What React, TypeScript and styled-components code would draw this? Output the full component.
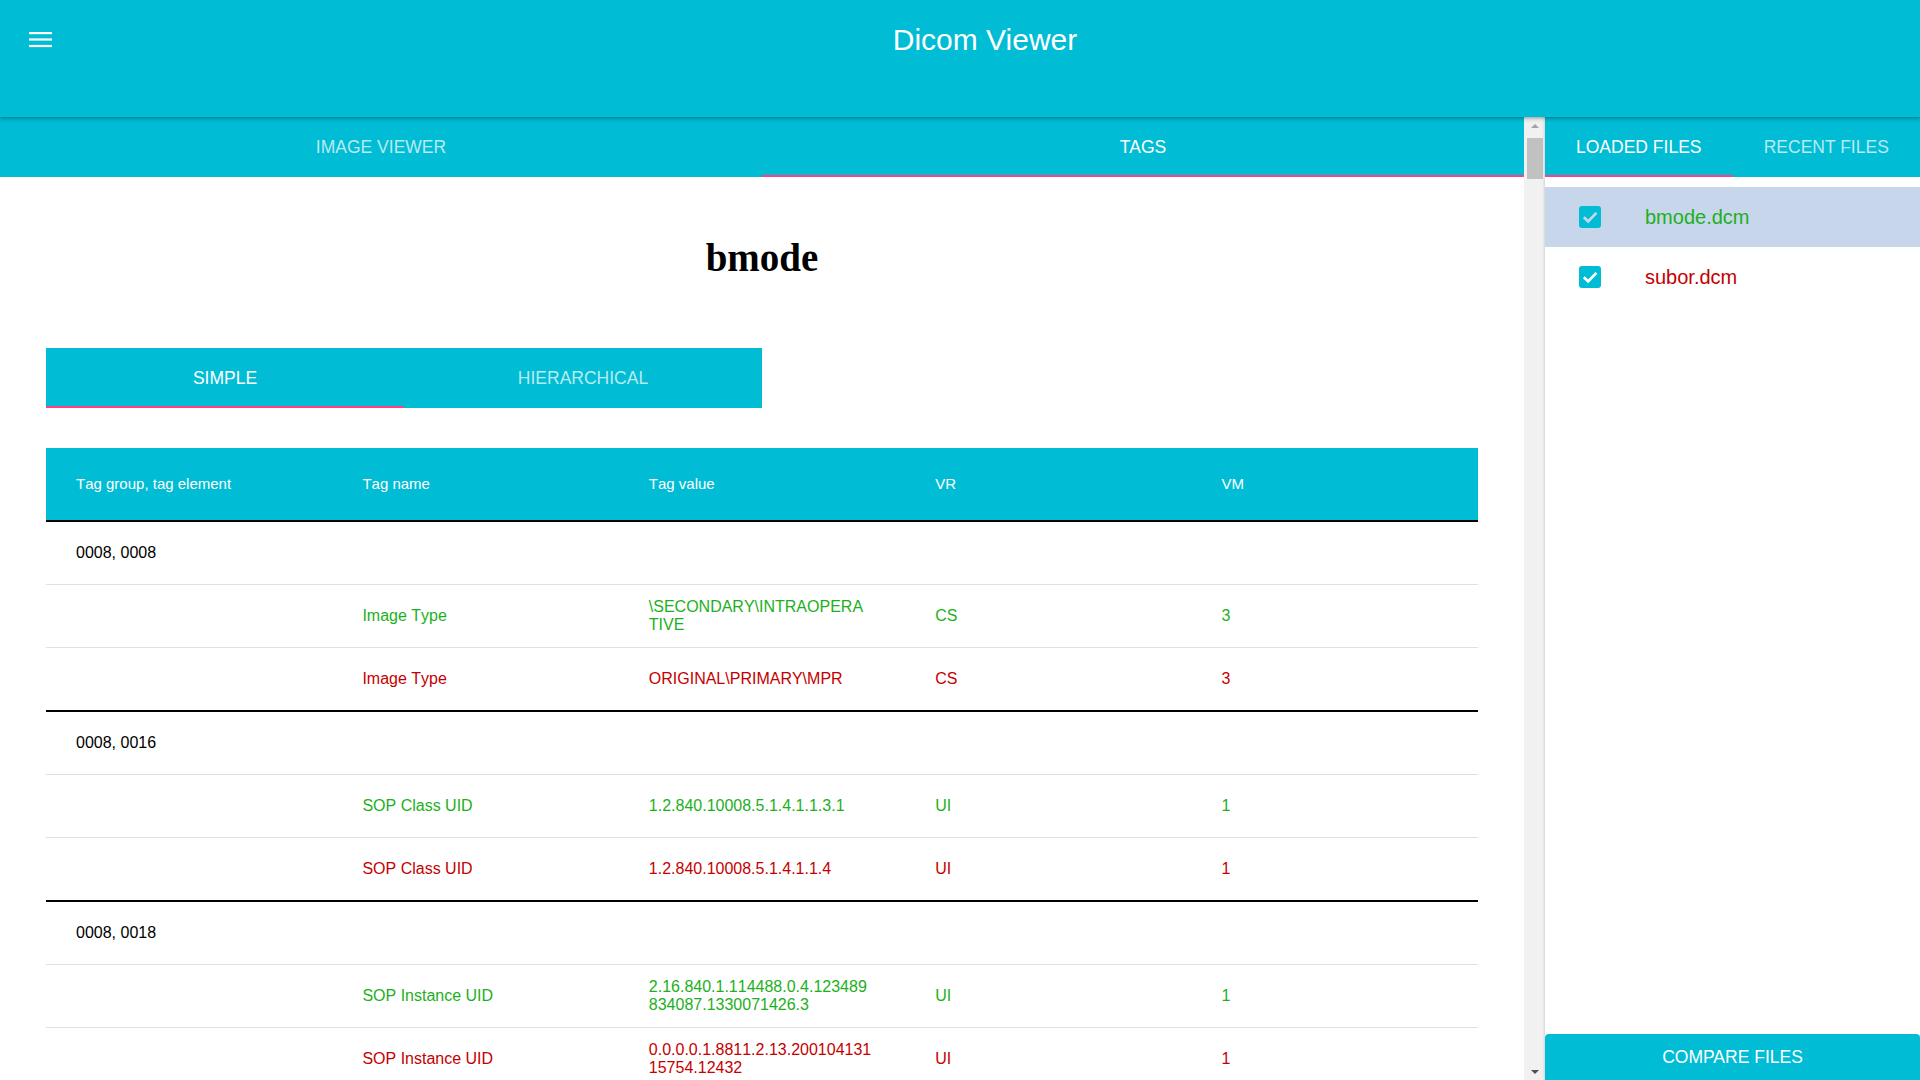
import React from 'react';
import styled, { createGlobalStyle } from 'styled-components';

const CYAN = '#00bcd4';
const PINK = '#ff4081';
const GREEN = '#1cb01c';
const RED = '#c40000';
const SELECTED = '#c8d6ec';

const GlobalStyle = createGlobalStyle`
  html, body { margin: 0; padding: 0; height: 100%; overflow: hidden; }
  body { font-family: "Liberation Sans", Arial, sans-serif; background: #fff; color: #000; }
  #root { height: 100vh; }
  * { box-sizing: border-box; }
`;

const Page = styled.div`
  display: flex;
  flex-direction: column;
  width: 1920px;
  height: 1080px;
  overflow: hidden;
`;

const Header = styled.header`
  position: relative;
  z-index: 2;
  flex-shrink: 0;
  height: 117px;
  background: ${CYAN};
  box-shadow: 0 2px 4px rgba(0, 0, 0, 0.22), 0 1px 2px rgba(0, 0, 0, 0.12);
`;

const Toolbar = styled.div`
  display: flex;
  align-items: center;
  height: 80px;
`;

const MenuButton = styled.button`
  width: 80px;
  height: 80px;
  padding: 0 0 0 29px;
  border: 0;
  background: none;
  display: flex;
  align-items: center;
  cursor: pointer;
`;

const Title = styled.h1`
  flex: 1;
  margin: 0 30px 0 0;
  text-align: center;
  color: #fff;
  font-weight: 400;
  font-size: 30px;
  line-height: 34px;
`;

const Body = styled.div`
  flex: 1;
  display: flex;
  min-height: 0;
`;

const Main = styled.div`
  flex: 1;
  display: flex;
  min-width: 0;
`;

const MainContent = styled.div`
  flex: 1;
  min-width: 0;
  overflow: hidden;
`;

const TabBar = styled.div<{ $cols: number }>`
  display: grid;
  grid-template-columns: repeat(${p => p.$cols}, 1fr);
  height: 60px;
  background: ${CYAN};
`;

const Tab = styled.div<{ $active?: boolean }>`
  display: flex;
  align-items: center;
  justify-content: center;
  font-size: 17.5px;
  text-transform: uppercase;
  color: ${p => (p.$active ? '#fff' : 'rgba(255,255,255,0.72)')};
  border-bottom: 2px solid ${p => (p.$active ? PINK : 'transparent')};
  padding-top: 2px;
  cursor: pointer;
`;

const FileTitle = styled.h2`
  margin: 58px 0 68px;
  text-align: center;
  font-family: "Liberation Serif", "Times New Roman", serif;
  font-weight: 700;
  font-size: 39px;
  line-height: 45px;
`;

const SubTabs = styled(TabBar)`
  width: 716px;
  margin: 0 0 40px 46px;
`;

const Table = styled.div`
  margin: 0 46px;
`;

const Row = styled.div<{ $kind: 'head' | 'group' | 'item' }>`
  display: grid;
  grid-template-columns: repeat(5, 1fr);
  height: ${p => (p.$kind === 'head' ? 72 : 62)}px;
  box-sizing: content-box;
  align-items: center;
  background: ${p => (p.$kind === 'head' ? CYAN : '#fff')};
  border-bottom: ${p => (p.$kind === 'head' ? 'none' : '1px solid #e0e0e0')};
  border-top: ${p => (p.$kind === 'group' ? '2px solid #000' : 'none')};
`;

const Group = styled.div`
  & > ${Row}:last-child {
    border-bottom: none;
  }
`;

const Cell = styled.div<{ $tone?: 'head' | 'black' | 'green' | 'red' }>`
  padding: 0 33.6px 0 30px;
  font-size: ${p => (p.$tone === 'head' ? 15 : 16)}px;
  line-height: 18px;
  word-break: break-all;
  font-kerning: none;
  color: ${p =>
    p.$tone === 'head' ? '#fff' : p.$tone === 'green' ? GREEN : p.$tone === 'red' ? RED : '#000'};
`;

const ScrollTrack = styled.div`
  width: 21px;
  flex-shrink: 0;
  background: #f1f1f1;
  display: flex;
  flex-direction: column;
  align-items: center;
`;

const ArrowButton = styled.div<{ $dir: 'up' | 'down' }>`
  height: 17px;
  width: 100%;
  display: flex;
  align-items: center;
  justify-content: center;
  &::after {
    content: '';
    width: 0;
    height: 0;
    border-left: 4px solid transparent;
    border-right: 4px solid transparent;
    ${p =>
      p.$dir === 'up'
        ? 'border-bottom: 4px solid #a3a3a3;'
        : 'border-top: 4px solid #505050;'}
  }
`;

const Thumb = styled.div`
  width: 16px;
  height: 41px;
  margin: 4px 0 0 1px;
  background: #c1c1c1;
`;

const Spacer = styled.div`
  flex: 1;
`;

const Sidebar = styled.aside`
  position: relative;
  width: 375px;
  flex-shrink: 0;
  display: flex;
  flex-direction: column;
  box-shadow: -1px 0 2px rgba(0, 0, 0, 0.12);
`;

const FileList = styled.ul`
  list-style: none;
  margin: 0;
  padding: 10px 0 0;
  flex: 1;
`;

const FileItem = styled.li<{ $selected?: boolean }>`
  display: flex;
  align-items: center;
  height: 60px;
  padding-left: 34px;
  background: ${p => (p.$selected ? SELECTED : '#fff')};
`;

const CheckBox = styled.span`
  width: 22px;
  height: 22px;
  border-radius: 3px;
  background: ${CYAN};
  display: flex;
  align-items: center;
  justify-content: center;
  margin-right: 44px;
`;

const FileName = styled.span<{ $tone: 'green' | 'red' }>`
  font-size: 20px;
  color: ${p => (p.$tone === 'green' ? GREEN : RED)};
`;

const CompareButton = styled.button`
  height: 46px;
  border: 0;
  border-radius: 4px 4px 0 0;
  background: ${CYAN};
  color: #fff;
  font-family: "Liberation Sans", Arial, sans-serif;
  font-size: 17.5px;
  text-transform: uppercase;
  cursor: pointer;
`;

type Item = { name: string; value: string; vr: string; vm: string; tone: 'green' | 'red' };
type TagGroup = { tag: string; items: Item[] };

const groups: TagGroup[] = [
  {
    tag: '0008, 0008',
    items: [
      { name: 'Image Type', value: '\\SECONDARY\\INTRAOPERATIVE', vr: 'CS', vm: '3', tone: 'green' },
      { name: 'Image Type', value: 'ORIGINAL\\PRIMARY\\MPR', vr: 'CS', vm: '3', tone: 'red' },
    ],
  },
  {
    tag: '0008, 0016',
    items: [
      { name: 'SOP Class UID', value: '1.2.840.10008.5.1.4.1.1.3.1', vr: 'UI', vm: '1', tone: 'green' },
      { name: 'SOP Class UID', value: '1.2.840.10008.5.1.4.1.1.4', vr: 'UI', vm: '1', tone: 'red' },
    ],
  },
  {
    tag: '0008, 0018',
    items: [
      {
        name: 'SOP Instance UID',
        value: '2.16.840.1.114488.0.4.123489834087.1330071426.3',
        vr: 'UI',
        vm: '1',
        tone: 'green',
      },
      {
        name: 'SOP Instance UID',
        value: '0.0.0.0.1.8811.2.13.20010413115754.12432',
        vr: 'UI',
        vm: '1',
        tone: 'red',
      },
    ],
  },
];

const MenuIcon = () => (
  <svg width="23" height="16" viewBox="0 0 23 16" fill="#fff">
    <rect x="0" y="0" width="23" height="2.2" />
    <rect x="0" y="6.4" width="23" height="2.2" />
    <rect x="0" y="12.9" width="23" height="2.2" />
  </svg>
);

const CheckIcon = ({ color }: { color: string }) => (
  <svg width="22" height="22" viewBox="0 0 22 22">
    <path d="M4.8 11.2 L9.2 15.4 L17.4 6.9" fill="none" stroke={color} strokeWidth="2.8" />
  </svg>
);

export default function App() {
  return (
    <Page>
      <GlobalStyle />
      <Header>
        <Toolbar>
          <MenuButton aria-label="menu">
            <MenuIcon />
          </MenuButton>
          <Title>Dicom Viewer</Title>
        </Toolbar>
      </Header>
      <Body>
        <Main>
          <MainContent>
            <TabBar $cols={2}>
              <Tab>Image Viewer</Tab>
              <Tab $active>Tags</Tab>
            </TabBar>
            <FileTitle>bmode</FileTitle>
            <SubTabs $cols={2}>
              <Tab $active>Simple</Tab>
              <Tab>Hierarchical</Tab>
            </SubTabs>
            <Table>
              <Row $kind="head">
                <Cell $tone="head">Tag group, tag element</Cell>
                <Cell $tone="head">Tag name</Cell>
                <Cell $tone="head">Tag value</Cell>
                <Cell $tone="head">VR</Cell>
                <Cell $tone="head">VM</Cell>
              </Row>
              {groups.map(g => (
                <Group key={g.tag}>
                  <Row $kind="group">
                    <Cell $tone="black">{g.tag}</Cell>
                  </Row>
                  {g.items.map((it, i) => (
                    <Row $kind="item" key={i}>
                      <Cell />
                      <Cell $tone={it.tone}>{it.name}</Cell>
                      <Cell $tone={it.tone}>{it.value}</Cell>
                      <Cell $tone={it.tone}>{it.vr}</Cell>
                      <Cell $tone={it.tone}>{it.vm}</Cell>
                    </Row>
                  ))}
                </Group>
              ))}
            </Table>
          </MainContent>
          <ScrollTrack>
            <ArrowButton $dir="up" />
            <Thumb />
            <Spacer />
            <ArrowButton $dir="down" />
          </ScrollTrack>
        </Main>
        <Sidebar>
          <TabBar $cols={2}>
            <Tab $active>Loaded Files</Tab>
            <Tab>Recent Files</Tab>
          </TabBar>
          <FileList>
            <FileItem $selected>
              <CheckBox>
                <CheckIcon color={SELECTED} />
              </CheckBox>
              <FileName $tone="green">bmode.dcm</FileName>
            </FileItem>
            <FileItem>
              <CheckBox>
                <CheckIcon color="#fff" />
              </CheckBox>
              <FileName $tone="red">subor.dcm</FileName>
            </FileItem>
          </FileList>
          <CompareButton>Compare Files</CompareButton>
        </Sidebar>
      </Body>
    </Page>
  );
}
